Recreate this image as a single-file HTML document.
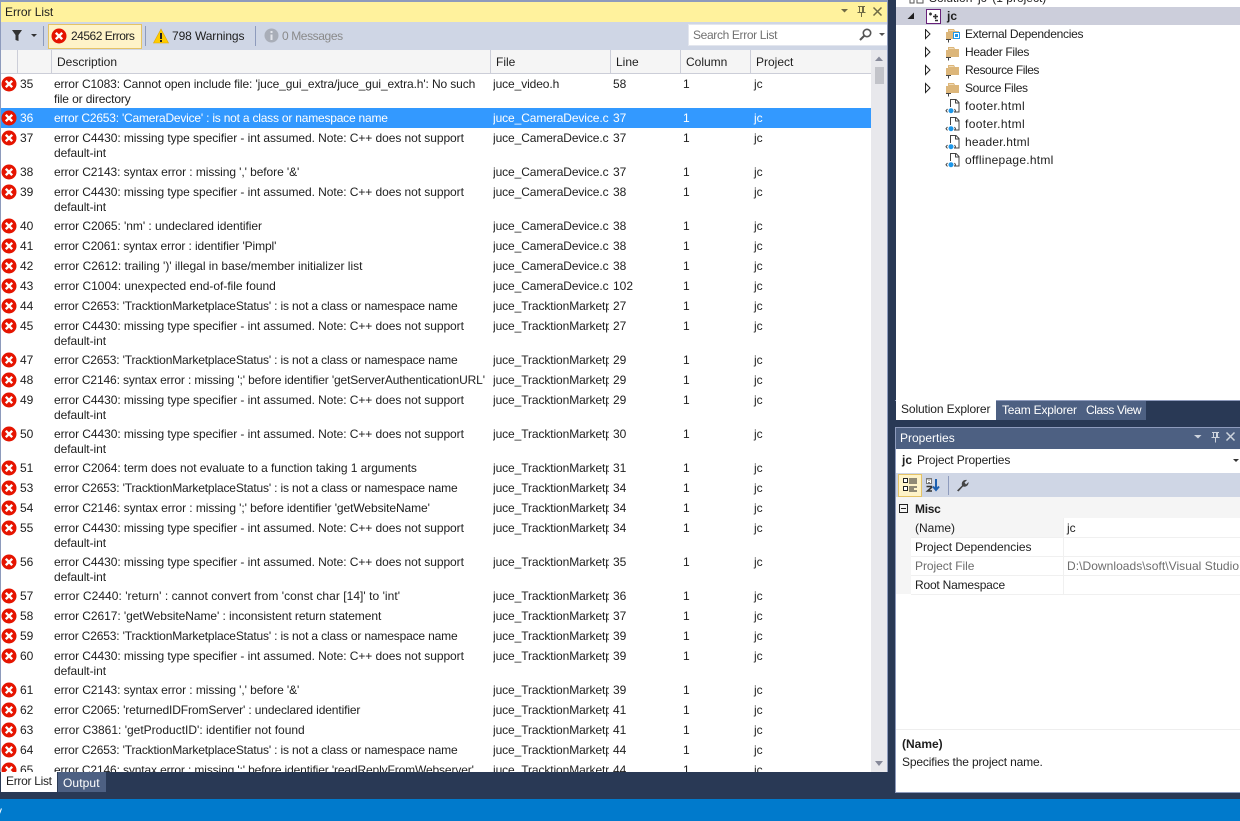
<!DOCTYPE html>
<html><head><meta charset="utf-8"><style>
html,body{margin:0;padding:0}
body{width:1240px;height:821px;overflow:hidden;position:relative;background:#293955;font:12px/15px "Liberation Sans",sans-serif;color:#1e1e1e}
div,span,svg{position:absolute;white-space:nowrap}
b span,.r span{display:block}
.r{left:0;width:871px}
.r svg{left:1px;top:2px}
.n{left:20px;top:3px}.d{left:54px;top:3px;white-space:pre-line;width:436px}
.f{left:493px;top:3px;width:116px;overflow:hidden;letter-spacing:-.1px}
.l{left:613px;top:3px}.c{left:683px;top:3px}.p{left:754px;top:3px}
.s{background:#3399ff;color:#fff}
.h{top:55px}.v{top:50px;width:1px;height:23px;background:#ccced8}
.t{left:965px}
.g{left:1063px;width:1px;background:#f0f0f0}
.hl{left:911px;width:329px;height:1px;background:#f0f0f0}
.a{letter-spacing:-.065px}.b{letter-spacing:-.16px}
</style></head><body>
<svg width="0" height="0"><defs>
<g id="e"><circle cx="8" cy="8" r="7.5" fill="#e51400"/><path d="M4.800 4.800l6.400 6.400M11.200 4.800l-6.400 6.400" stroke="#fff" stroke-width="2.400"/></g>
<g id="fo"><path d="M3 3h6l1 2h4v8H1V6h2z" fill="#dcb67a"/><path d="M4 4h4.500l.5 1H4z" fill="#efd9b4"/><path d="M1 13.500h5M3.500 13.500v3" stroke="#444"/></g>
<g id="fi"><path d="M5.500 9V1.500h5.500l3 3v9.500H9" fill="#fff" stroke="#444"/><path d="M10.500 1.500v3.500h3.500" fill="none" stroke="#444"/><circle cx="6" cy="12.700" r="2.500" fill="#1c97ea"/><path d="M2.500 11L1 12.700l1.500 1.700M9.500 11l1 1.700-1 1.700" fill="none" stroke="#444"/></g>
</defs></svg>

<!-- Error list panel -->
<div style="left:0;top:0;width:888px;height:772px;background:#fff"></div>
<div style="left:0;top:0;width:888px;height:2px;background:#8e9bbc"></div>
<div style="left:0;top:2px;width:888px;height:20px;background:#fff29d"></div>
<div style="left:5px;top:5px;letter-spacing:-.05px">Error List</div>
<svg style="left:838px;top:5px" width="50" height="16"><path d="M3 4h7l-3.500 3.500z" fill="#6f6a45"/><path d="M20 1.500h7M21.500 1.500v6h4v-6M19.500 7.500h8M23.500 7.500v4.500M24.500 1.500v6" stroke="#6f6a45" fill="none"/><path d="M35.500 2.500l8 8M43.500 2.500l-8 8" stroke="#6f6a45" stroke-width="1.500"/></svg>

<div style="left:0;top:22px;width:888px;height:28px;background:#cfd6e5"></div>
<svg style="left:11px;top:29px" width="30" height="14"><path d="M1 1h10L7.500 6v6L4.500 11V6z" fill="#333"/><path d="M20 5h6l-3 3z" fill="#333"/></svg>
<div style="left:43px;top:26px;width:1px;height:20px;background:#8e9bbc"></div>
<div style="left:48px;top:24px;width:92px;height:23px;background:#fef3c8;border:1px solid #e5c365"></div>
<svg style="left:51px;top:28px" width="16" height="16"><use href="#e"/></svg>
<div style="left:71px;top:29px;letter-spacing:-.5px">24562 Errors</div>
<div style="left:145px;top:26px;width:1px;height:20px;background:#8e9bbc"></div>
<svg style="left:153px;top:28px" width="16" height="16"><path d="M8 1L15.500 15H.5z" fill="#ffcc00" stroke="#e0a800" stroke-width=".6"/><path d="M8 5v6M8 12v2" stroke="#222" stroke-width="2"/></svg>
<div style="left:172px;top:29px;letter-spacing:-.1px">798 Warnings</div>
<div style="left:255px;top:26px;width:1px;height:20px;background:#8e9bbc"></div>
<svg style="left:264px;top:28px" width="15" height="15"><circle cx="7.500" cy="7.500" r="7" fill="#a9aeb8"/><path d="M7.500 3v2M7.500 6.500V12" stroke="#e4e6ec" stroke-width="2"/></svg>
<div style="left:282px;top:29px;color:#8a8a8a;letter-spacing:-.4px">0 Messages</div>
<div style="left:688px;top:24px;width:198px;height:20px;background:#fff;border:1px solid #e3e6ee"></div>
<div style="left:693px;top:28px;color:#717171;letter-spacing:-.35px">Search Error List</div>
<svg style="left:858px;top:27px" width="28" height="15"><circle cx="9" cy="6" r="3.700" fill="none" stroke="#555" stroke-width="1.600"/><path d="M6.500 8.500L2 13" stroke="#555" stroke-width="2"/><path d="M21 6h6l-3 3z" fill="#555"/></svg>

<div style="left:0;top:50px;width:871px;height:23px;background:#f5f5f5"></div>
<div style="left:0;top:73px;width:871px;height:1px;background:#ccced8"></div>
<div class="v" style="left:17px"></div><div class="v" style="left:51px"></div><div class="v" style="left:490px"></div><div class="v" style="left:610px"></div><div class="v" style="left:680px"></div><div class="v" style="left:750px"></div>
<div class="h" style="left:57px">Description</div><div class="h" style="left:496px">File</div><div class="h" style="left:616px">Line</div><div class="h" style="left:686px">Column</div><div class="h" style="left:756px">Project</div>

<div style="left:0;top:74px;width:871px;height:698px;overflow:hidden">
<div class="r" style="top:0;height:34px"><svg width="16" height="16"><use href="#e"/></svg><span class="n">35</span><span class="d" style="letter-spacing:-.12px">error C1083: Cannot open include file: 'juce_gui_extra/juce_gui_extra.h': No such
file or directory</span><span class="f">juce_video.h</span><span class="l">58</span><span class="c">1</span><span class="p">jc</span></div>
<div class="r s" style="top:34px;height:20px"><svg width="16" height="16"><use href="#e"/></svg><span class="n">36</span><span class="d" style="letter-spacing:-.21px">error C2653: 'CameraDevice' : is not a class or namespace name</span><span class="f">juce_CameraDevice.cpp</span><span class="l">37</span><span class="c">1</span><span class="p">jc</span></div>
<div class="r" style="top:54px;height:34px"><svg width="16" height="16"><use href="#e"/></svg><span class="n">37</span><span class="d a">error C4430: missing type specifier - int assumed. Note: C++ does not support
default-int</span><span class="f">juce_CameraDevice.cpp</span><span class="l">37</span><span class="c">1</span><span class="p">jc</span></div>
<div class="r" style="top:88px;height:20px"><svg width="16" height="16"><use href="#e"/></svg><span class="n">38</span><span class="d" style="letter-spacing:-.08px">error C2143: syntax error : missing ',' before '&amp;'</span><span class="f">juce_CameraDevice.cpp</span><span class="l">37</span><span class="c">1</span><span class="p">jc</span></div>
<div class="r" style="top:108px;height:34px"><svg width="16" height="16"><use href="#e"/></svg><span class="n">39</span><span class="d a">error C4430: missing type specifier - int assumed. Note: C++ does not support
default-int</span><span class="f">juce_CameraDevice.cpp</span><span class="l">38</span><span class="c">1</span><span class="p">jc</span></div>
<div class="r" style="top:142px;height:20px"><svg width="16" height="16"><use href="#e"/></svg><span class="n">40</span><span class="d" style="letter-spacing:-.05px">error C2065: 'nm' : undeclared identifier</span><span class="f">juce_CameraDevice.cpp</span><span class="l">38</span><span class="c">1</span><span class="p">jc</span></div>
<div class="r" style="top:162px;height:20px"><svg width="16" height="16"><use href="#e"/></svg><span class="n">41</span><span class="d" style="letter-spacing:-.11px">error C2061: syntax error : identifier 'Pimpl'</span><span class="f">juce_CameraDevice.cpp</span><span class="l">38</span><span class="c">1</span><span class="p">jc</span></div>
<div class="r" style="top:182px;height:20px"><svg width="16" height="16"><use href="#e"/></svg><span class="n">42</span><span class="d" style="letter-spacing:-.015px">error C2612: trailing ')' illegal in base/member initializer list</span><span class="f">juce_CameraDevice.cpp</span><span class="l">38</span><span class="c">1</span><span class="p">jc</span></div>
<div class="r" style="top:202px;height:20px"><svg width="16" height="16"><use href="#e"/></svg><span class="n">43</span><span class="d" style="letter-spacing:-.025px">error C1004: unexpected end-of-file found</span><span class="f">juce_CameraDevice.cpp</span><span class="l">102</span><span class="c">1</span><span class="p">jc</span></div>
<div class="r" style="top:222px;height:20px"><svg width="16" height="16"><use href="#e"/></svg><span class="n">44</span><span class="d b">error C2653: 'TracktionMarketplaceStatus' : is not a class or namespace name</span><span class="f">juce_TracktionMarketplace</span><span class="l">27</span><span class="c">1</span><span class="p">jc</span></div>
<div class="r" style="top:242px;height:34px"><svg width="16" height="16"><use href="#e"/></svg><span class="n">45</span><span class="d a">error C4430: missing type specifier - int assumed. Note: C++ does not support
default-int</span><span class="f">juce_TracktionMarketplace</span><span class="l">27</span><span class="c">1</span><span class="p">jc</span></div>
<div class="r" style="top:276px;height:20px"><svg width="16" height="16"><use href="#e"/></svg><span class="n">47</span><span class="d b">error C2653: 'TracktionMarketplaceStatus' : is not a class or namespace name</span><span class="f">juce_TracktionMarketplace</span><span class="l">29</span><span class="c">1</span><span class="p">jc</span></div>
<div class="r" style="top:296px;height:20px"><svg width="16" height="16"><use href="#e"/></svg><span class="n">48</span><span class="d" style="letter-spacing:-.13px;white-space:nowrap">error C2146: syntax error : missing ';' before identifier 'getServerAuthenticationURL'</span><span class="f">juce_TracktionMarketplace</span><span class="l">29</span><span class="c">1</span><span class="p">jc</span></div>
<div class="r" style="top:316px;height:34px"><svg width="16" height="16"><use href="#e"/></svg><span class="n">49</span><span class="d a">error C4430: missing type specifier - int assumed. Note: C++ does not support
default-int</span><span class="f">juce_TracktionMarketplace</span><span class="l">29</span><span class="c">1</span><span class="p">jc</span></div>
<div class="r" style="top:350px;height:34px"><svg width="16" height="16"><use href="#e"/></svg><span class="n">50</span><span class="d a">error C4430: missing type specifier - int assumed. Note: C++ does not support
default-int</span><span class="f">juce_TracktionMarketplace</span><span class="l">30</span><span class="c">1</span><span class="p">jc</span></div>
<div class="r" style="top:384px;height:20px"><svg width="16" height="16"><use href="#e"/></svg><span class="n">51</span><span class="d" style="letter-spacing:-.06px">error C2064: term does not evaluate to a function taking 1 arguments</span><span class="f">juce_TracktionMarketplace</span><span class="l">31</span><span class="c">1</span><span class="p">jc</span></div>
<div class="r" style="top:404px;height:20px"><svg width="16" height="16"><use href="#e"/></svg><span class="n">53</span><span class="d b">error C2653: 'TracktionMarketplaceStatus' : is not a class or namespace name</span><span class="f">juce_TracktionMarketplace</span><span class="l">34</span><span class="c">1</span><span class="p">jc</span></div>
<div class="r" style="top:424px;height:20px"><svg width="16" height="16"><use href="#e"/></svg><span class="n">54</span><span class="d" style="letter-spacing:-.08px">error C2146: syntax error : missing ';' before identifier 'getWebsiteName'</span><span class="f">juce_TracktionMarketplace</span><span class="l">34</span><span class="c">1</span><span class="p">jc</span></div>
<div class="r" style="top:444px;height:34px"><svg width="16" height="16"><use href="#e"/></svg><span class="n">55</span><span class="d a">error C4430: missing type specifier - int assumed. Note: C++ does not support
default-int</span><span class="f">juce_TracktionMarketplace</span><span class="l">34</span><span class="c">1</span><span class="p">jc</span></div>
<div class="r" style="top:478px;height:34px"><svg width="16" height="16"><use href="#e"/></svg><span class="n">56</span><span class="d a">error C4430: missing type specifier - int assumed. Note: C++ does not support
default-int</span><span class="f">juce_TracktionMarketplace</span><span class="l">35</span><span class="c">1</span><span class="p">jc</span></div>
<div class="r" style="top:512px;height:20px"><svg width="16" height="16"><use href="#e"/></svg><span class="n">57</span><span class="d" style="letter-spacing:.04px">error C2440: 'return' : cannot convert from 'const char [14]' to 'int'</span><span class="f">juce_TracktionMarketplace</span><span class="l">36</span><span class="c">1</span><span class="p">jc</span></div>
<div class="r" style="top:532px;height:20px"><svg width="16" height="16"><use href="#e"/></svg><span class="n">58</span><span class="d" style="letter-spacing:-.065px">error C2617: 'getWebsiteName' : inconsistent return statement</span><span class="f">juce_TracktionMarketplace</span><span class="l">37</span><span class="c">1</span><span class="p">jc</span></div>
<div class="r" style="top:552px;height:20px"><svg width="16" height="16"><use href="#e"/></svg><span class="n">59</span><span class="d b">error C2653: 'TracktionMarketplaceStatus' : is not a class or namespace name</span><span class="f">juce_TracktionMarketplace</span><span class="l">39</span><span class="c">1</span><span class="p">jc</span></div>
<div class="r" style="top:572px;height:34px"><svg width="16" height="16"><use href="#e"/></svg><span class="n">60</span><span class="d a">error C4430: missing type specifier - int assumed. Note: C++ does not support
default-int</span><span class="f">juce_TracktionMarketplace</span><span class="l">39</span><span class="c">1</span><span class="p">jc</span></div>
<div class="r" style="top:606px;height:20px"><svg width="16" height="16"><use href="#e"/></svg><span class="n">61</span><span class="d" style="letter-spacing:-.08px">error C2143: syntax error : missing ',' before '&amp;'</span><span class="f">juce_TracktionMarketplace</span><span class="l">39</span><span class="c">1</span><span class="p">jc</span></div>
<div class="r" style="top:626px;height:20px"><svg width="16" height="16"><use href="#e"/></svg><span class="n">62</span><span class="d" style="letter-spacing:-.12px">error C2065: 'returnedIDFromServer' : undeclared identifier</span><span class="f">juce_TracktionMarketplace</span><span class="l">41</span><span class="c">1</span><span class="p">jc</span></div>
<div class="r" style="top:646px;height:20px"><svg width="16" height="16"><use href="#e"/></svg><span class="n">63</span><span class="d">error C3861: 'getProductID': identifier not found</span><span class="f">juce_TracktionMarketplace</span><span class="l">41</span><span class="c">1</span><span class="p">jc</span></div>
<div class="r" style="top:666px;height:20px"><svg width="16" height="16"><use href="#e"/></svg><span class="n">64</span><span class="d b">error C2653: 'TracktionMarketplaceStatus' : is not a class or namespace name</span><span class="f">juce_TracktionMarketplace</span><span class="l">44</span><span class="c">1</span><span class="p">jc</span></div>
<div class="r" style="top:686px;height:20px"><svg width="16" height="16"><use href="#e"/></svg><span class="n">65</span><span class="d" style="letter-spacing:-.13px">error C2146: syntax error : missing ';' before identifier 'readReplyFromWebserver'</span><span class="f">juce_TracktionMarketplace</span><span class="l">44</span><span class="c">1</span><span class="p">jc</span></div>
</div>

<!-- scrollbar -->
<div style="left:871px;top:50px;width:16px;height:722px;background:#e8e8ec"></div>
<div style="left:875px;top:67px;width:9px;height:17px;background:#c2c3c9"></div>
<svg style="left:871px;top:54px" width="16" height="10"><path d="M4 7h8L8 2.500z" fill="#868999"/></svg>
<svg style="left:871px;top:759px" width="16" height="10"><path d="M4 2h8L8 7z" fill="#868999"/></svg>
<div style="left:887px;top:0;width:1px;height:772px;background:#8e9bbc"></div>
<div style="left:0;top:0;width:1px;height:772px;background:#8e9bbc"></div>

<!-- bottom tabs -->
<div style="left:1px;top:772px;width:56px;height:20px;background:#fff"></div>
<div style="left:6px;top:774px;letter-spacing:-.3px">Error List</div>
<div style="left:58px;top:772px;width:48px;height:20px;background:#4d6082"></div>
<div style="left:63px;top:776px;color:#fff;letter-spacing:.1px">Output</div>

<!-- solution explorer -->
<div style="left:896px;top:0;width:344px;height:400px;background:#fff"></div>
<div style="left:929px;top:-9px">Solution 'jc' (1 project)</div>
<svg style="left:909px;top:0" width="16" height="4"><path d="M1 0v3h4V0M8 0v3h6V0" fill="none" stroke="#555"/></svg>
<div style="left:896px;top:7px;width:344px;height:18px;background:#cccedb"></div>
<svg style="left:906px;top:11px" width="10" height="10"><path d="M8 1.500V8H1.500z" fill="#1e1e1e"/></svg>
<svg style="left:926px;top:9px" width="16" height="16"><rect x=".5" y=".5" width="14" height="14" fill="#fff" stroke="#68217a"/><path d="M3 5h3M4.500 3.500v3M7 7.500h5M9.500 5v5M9 11.500h3" stroke="#333" stroke-width="1.500"/></svg>
<div style="left:947px;top:9px;font-weight:bold">jc</div>
<svg style="left:924px;top:29px" width="8" height="130"><path d="M1.500.5L6 5 1.500 9.500zM1.500 18.500L6 23 1.500 27.500zM1.500 36.500L6 41 1.500 45.500zM1.500 54.500L6 59 1.500 63.500z" fill="#fff" stroke="#222"/></svg>
<svg style="left:945px;top:26px" width="16" height="18"><use href="#fo"/><rect x="8.500" y="6.500" width="6" height="6" fill="#fff" stroke="#1c97ea"/><rect x="10" y="8" width="3" height="3" fill="#1c97ea"/></svg>
<svg style="left:945px;top:44px" width="16" height="18"><use href="#fo"/></svg>
<svg style="left:945px;top:62px" width="16" height="18"><use href="#fo"/></svg>
<svg style="left:945px;top:80px" width="16" height="18"><use href="#fo"/></svg>
<svg style="left:945px;top:98px" width="16" height="18"><use href="#fi"/></svg>
<svg style="left:945px;top:116px" width="16" height="18"><use href="#fi"/></svg>
<svg style="left:945px;top:134px" width="16" height="18"><use href="#fi"/></svg>
<svg style="left:945px;top:152px" width="16" height="18"><use href="#fi"/></svg>
<div class="t" style="top:27px;letter-spacing:-.28px">External Dependencies</div>
<div class="t" style="top:45px;letter-spacing:-.33px">Header Files</div>
<div class="t" style="top:63px;letter-spacing:-.43px">Resource Files</div>
<div class="t" style="top:81px;letter-spacing:-.33px">Source Files</div>
<div class="t" style="top:99px;letter-spacing:.36px">footer.html</div>
<div class="t" style="top:117px;letter-spacing:.36px">footer.html</div>
<div class="t" style="top:135px;letter-spacing:.18px">header.html</div>
<div class="t" style="top:153px;letter-spacing:.25px">offlinepage.html</div>

<!-- right tabs -->
<div style="left:895px;top:400px;width:345px;height:1px;background:#8e9bbc"></div>
<div style="left:896px;top:400px;width:100px;height:20px;background:#fff"></div>
<div style="left:901px;top:402px;letter-spacing:-.12px">Solution Explorer</div>
<div style="left:996px;top:401px;width:150px;height:19px;background:#4d6082"></div>
<div style="left:1002px;top:403px;color:#fff;letter-spacing:-.2px">Team Explorer</div>
<div style="left:1086px;top:403px;color:#fff;letter-spacing:-.4px">Class View</div>

<!-- properties -->
<div style="left:895px;top:427px;width:345px;height:365px;background:#fff"></div>
<div style="left:895px;top:427px;width:345px;height:1px;background:#8e9bbc"></div>
<div style="left:895px;top:428px;width:1px;height:365px;background:#8e9bbc"></div>
<div style="left:895px;top:792px;width:345px;height:1px;background:#8e9bbc"></div>
<div style="left:896px;top:428px;width:344px;height:21px;background:#4d6082"></div>
<div style="left:900px;top:431px;color:#fff">Properties</div>
<svg style="left:1190px;top:430px" width="50" height="16"><path d="M4 5h7.500l-3.500 3.500z" fill="#ced4dd"/><path d="M22 2.500h7M23.500 2.500v5h4v-5M21.500 7.500h8M25.500 7.500v5M26.500 2.500v5" stroke="#ced4dd" fill="none"/><path d="M36.500 2.500l8 8M44.500 2.500l-8 8" stroke="#ced4dd" stroke-width="1.500"/></svg>
<div style="left:902px;top:453px"><b>jc</b></div>
<div style="left:917px;top:453px;letter-spacing:-.12px">Project Properties</div>
<svg style="left:1232px;top:458px" width="8" height="6"><path d="M1 1h6L4 4z" fill="#333"/></svg>
<div style="left:896px;top:473px;width:344px;height:24px;background:#cfd6e5"></div>
<div style="left:898px;top:474px;width:22px;height:21px;background:#fef3c8;border:1px solid #e5c365"></div>
<svg style="left:902px;top:477px" width="16" height="16"><path d="M1.500 1.500h4v4h-4zM1.500 9.500h4v4h-4z" fill="#fff" stroke="#222"/><path d="M7 2h8M7 4h8M7 6h8M7 10h8M7 12h5M7 14h8" stroke="#222"/></svg>
<svg style="left:925px;top:477px" width="18" height="17"><rect x="1" y="1" width="6" height="6" fill="#777"/><path d="M2.500 6V3h3v3M2.500 4.500h3" stroke="#fff" fill="none"/><path d="M1.500 9.500h5v1L2.500 14h4.500" stroke="#333" stroke-width="1.500" fill="none"/><path d="M11 2v11M8 9.500l3 3.500 3-3.500" stroke="#1c5fb0" stroke-width="2" fill="none"/></svg>
<div style="left:948px;top:476px;width:1px;height:19px;background:#8e9bbc"></div>
<svg style="left:956px;top:478px" width="14" height="14"><path d="M1 12.500L6 7.500C5 4 7.500 1.500 11 2L8.500 4.500 10 6.500 12.500 4C13 7 10 9.500 7 8.500L2.500 13.500z" fill="#444"/></svg>
<div style="left:896px;top:497px;width:15px;height:97px;background:#f5f5f5"></div>
<div style="left:896px;top:497px;width:344px;height:21px;background:#f5f5f5"></div>
<svg style="left:899px;top:504px" width="10" height="10"><rect x=".5" y=".5" width="8" height="8" fill="#f5f5f5" stroke="#222"/><path d="M2 4.500h5" stroke="#222"/></svg>
<div style="left:915px;top:502px;letter-spacing:-.3px"><b>Misc</b></div>
<div style="left:911px;top:518px;width:153px;height:19px;background:#f5f5f5"></div>
<div class="hl" style="top:537px"></div><div class="hl" style="top:556px"></div><div class="hl" style="top:575px"></div><div class="hl" style="top:594px"></div>
<div class="g" style="top:518px;height:76px"></div>
<div style="left:915px;top:521px">(Name)</div><div style="left:1067px;top:521px">jc</div>
<div style="left:915px;top:540px;letter-spacing:-.05px">Project Dependencies</div>
<div style="left:915px;top:559px;color:#6d6d6d;letter-spacing:-.05px">Project File</div>
<div style="left:1067px;top:559px;width:173px;overflow:hidden;color:#6d6d6d;letter-spacing:.05px">D:\Downloads\soft\Visual Studio 2015\Projects</div>
<div style="left:915px;top:578px;letter-spacing:-.2px">Root Namespace</div>
<div style="left:896px;top:729px;width:344px;height:1px;background:#eeeeee"></div>
<div style="left:902px;top:737px"><b>(Name)</b></div>
<div style="left:902px;top:755px;letter-spacing:-.15px">Specifies the project name.</div>

<!-- status bar -->
<div style="left:0;top:799px;width:1240px;height:22px;background:#007acc"></div>
<div style="left:-4px;top:804px;color:#fff">y</div>
</body></html>
